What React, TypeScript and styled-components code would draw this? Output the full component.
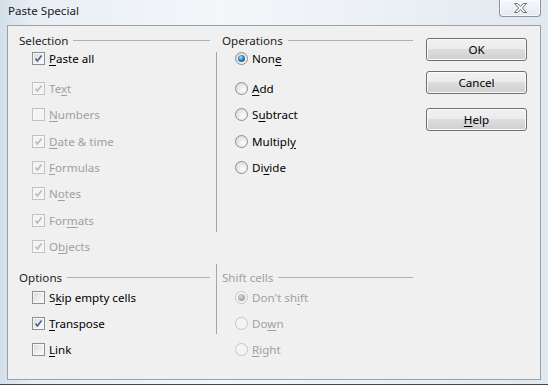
import styled, { createGlobalStyle } from "styled-components";

const GlobalStyle = createGlobalStyle`
  html, body {
    margin: 0;
    padding: 0;
  }
  body {
    width: 548px;
    height: 385px;
    overflow: hidden;
    font-family: "Noto Sans", "Segoe UI", sans-serif;
    font-size: 11.6px;
  }
`;

const Window = styled.div`
  width: 548px;
  height: 385px;
  box-sizing: border-box;
  display: flex;
  flex-direction: column;
  padding: 0 7px 4px 7px;
  background: linear-gradient(
    90deg,
    #d3dfea 0%,
    #e8eef4 6%,
    #f4f7fa 40%,
    #eaeff4 75%,
    #e1e8ee 100%
  );
  border-bottom: 1px solid #3d4650;
`;

const TitleBar = styled.div`
  height: 25px;
  display: flex;
  align-items: flex-start;
  justify-content: space-between;
`;

const Title = styled.div`
  padding: 3px 0 0 1px;
  line-height: 16px;
  color: #1a1a1a;
`;

const CloseButton = styled.div`
  width: 42px;
  height: 17px;
  box-sizing: border-box;
  display: flex;
  align-items: center;
  justify-content: center;
  border: 1px solid #8b949d;
  border-top: none;
  border-radius: 0 0 4px 4px;
  background: linear-gradient(#f6f8fa, #e6ebf0);
  box-shadow: inset 0 0 0 1px rgba(255, 255, 255, 0.7);
`;

const Client = styled.div`
  flex: 1;
  display: flex;
  border: 1px solid #98a2ab;
  background: #f0f0f0;
  padding: 7px 13px 0 11px;
  color: #000;
`;

const Groups = styled.div`
  display: grid;
  grid-template-columns: 191px 12px 191px;
  grid-template-rows: 237px auto;
`;

const Group = styled.div`
  display: flex;
  flex-direction: column;
`;

const Header = styled.div`
  display: flex;
  align-items: center;
  height: 15px;
  line-height: 15px;
`;

const HeaderText = styled.span<{ $disabled?: boolean }>`
  color: ${(p) => (p.$disabled ? "#a0a0a0" : "#1e1e1e")};
`;

const HeaderLine = styled.div`
  flex: 1;
  height: 1px;
  margin-left: 5px;
  background: #b0b0b0;
`;

const Body = styled.div<{ $offset: number }>`
  display: flex;
  flex-direction: column;
  padding-left: 13px;
  margin-top: ${(p) => p.$offset}px;
`;

const Separator = styled.div<{ $top: number; $height: number }>`
  width: 1px;
  margin-left: 6px;
  margin-top: ${(p) => p.$top}px;
  height: ${(p) => p.$height}px;
  background: #a5a5a5;
`;

const Row = styled.div<{ $gap?: boolean; $disabled?: boolean }>`
  display: flex;
  align-items: center;
  gap: 4px;
  height: 26.33px;
  margin-bottom: ${(p) => (p.$gap ? 4 : 0)}px;
  color: ${(p) => (p.$disabled ? "#a0a0a0" : "#000")};
  white-space: nowrap;
`;

const Box = styled.span<{ $disabled?: boolean }>`
  width: 13px;
  height: 13px;
  box-sizing: border-box;
  flex: none;
  display: flex;
  align-items: center;
  justify-content: center;
  border: 1px solid ${(p) => (p.$disabled ? "#c2c2c2" : "#8e8f8f")};
  box-shadow: inset 0 0 0 1px #f7f7f7;
  background: ${(p) =>
    p.$disabled
      ? "#f4f4f4"
      : "linear-gradient(135deg, #d5d9de 0%, #eef0f2 60%, #fbfbfb 100%)"};
`;

const Radio = styled.span<{ $disabled?: boolean }>`
  width: 13px;
  height: 13px;
  box-sizing: border-box;
  flex: none;
  display: flex;
  align-items: center;
  justify-content: center;
  border-radius: 50%;
  border: 1px solid ${(p) => (p.$disabled ? "#c6c6c6" : "#8e8f8f")};
  background: ${(p) =>
    p.$disabled
      ? "#f4f4f4"
      : "radial-gradient(circle at 65% 65%, #fdfdfd 0%, #e6e6e6 55%, #cfd2d6 100%)"};
`;

const Dot = styled.span<{ $disabled?: boolean }>`
  width: 7px;
  height: 7px;
  border-radius: 50%;
  background: ${(p) =>
    p.$disabled
      ? "radial-gradient(circle at 40% 35%, #d8d8d8 0%, #a9a9a9 60%, #8d8d8d 100%)"
      : "radial-gradient(circle at 40% 35%, #a7e3ff 0%, #2f7fbf 45%, #0e3e6c 100%)"};
`;

const Key = styled.span`
  text-decoration: underline;
  text-underline-offset: 2px;
`;

const ButtonColumn = styled.div`
  display: flex;
  flex-direction: column;
  margin-left: 13px;
  padding-top: 5px;
`;

const Button = styled.div<{ $space: number }>`
  width: 101px;
  height: 23px;
  box-sizing: border-box;
  margin-top: ${(p) => p.$space}px;
  display: flex;
  align-items: center;
  justify-content: center;
  border: 1px solid #707070;
  border-radius: 3px;
  background: linear-gradient(#f2f2f2 0%, #ebebeb 49%, #dddddd 50%, #cfcfcf 100%);
  box-shadow: inset 0 0 0 1px #fbfbfb;
  color: #000;
`;

const Mnemonic = ({ text, k }: { text: string; k: number }) => (
  <span>
    {text.slice(0, k)}
    <Key>{text[k]}</Key>
    {text.slice(k + 1)}
  </span>
);

type Item = { text: string; k: number; on: boolean; disabled?: boolean };

const Check = ({ disabled }: { disabled?: boolean }) => (
  <svg width="9" height="9" viewBox="0 0 9 9">
    <path
      d="M1.5 4.6 L3.4 7 L7.6 1.6"
      fill="none"
      stroke={disabled ? "#b9b9b9" : "#4b5f8a"}
      strokeWidth="1.6"
    />
  </svg>
);

const CheckList = ({ items, offset, first }: { items: Item[]; offset: number; first?: boolean }) => (
  <Body $offset={offset}>
    {items.map((it, i) => (
      <Row key={it.text} $gap={first && i === 0} $disabled={it.disabled}>
        <Box $disabled={it.disabled}>{it.on && <Check disabled={it.disabled} />}</Box>
        <Mnemonic text={it.text} k={it.k} />
      </Row>
    ))}
  </Body>
);

const RadioList = ({ items, offset, first }: { items: Item[]; offset: number; first?: boolean }) => (
  <Body $offset={offset}>
    {items.map((it, i) => (
      <Row key={it.text} $gap={first && i === 0} $disabled={it.disabled}>
        <Radio $disabled={it.disabled}>{it.on && <Dot $disabled={it.disabled} />}</Radio>
        <Mnemonic text={it.text} k={it.k} />
      </Row>
    ))}
  </Body>
);

const selection: Item[] = [
  { text: "Paste all", k: 0, on: true },
  { text: "Text", k: 2, on: true, disabled: true },
  { text: "Numbers", k: 0, on: false, disabled: true },
  { text: "Date & time", k: 0, on: true, disabled: true },
  { text: "Formulas", k: 0, on: true, disabled: true },
  { text: "Notes", k: 1, on: true, disabled: true },
  { text: "Formats", k: 3, on: true, disabled: true },
  { text: "Objects", k: 1, on: true, disabled: true },
];

const operations: Item[] = [
  { text: "None", k: 3, on: true },
  { text: "Add", k: 0, on: false },
  { text: "Subtract", k: 1, on: false },
  { text: "Multiply", k: 7, on: false },
  { text: "Divide", k: 2, on: false },
];

const options: Item[] = [
  { text: "Skip empty cells", k: 1, on: false },
  { text: "Transpose", k: 0, on: true },
  { text: "Link", k: 0, on: false },
];

const shift: Item[] = [
  { text: "Don't shift", k: 8, on: true, disabled: true },
  { text: "Down", k: 2, on: false, disabled: true },
  { text: "Right", k: 0, on: false, disabled: true },
];

const App = () => {
  return (
    <>
      <GlobalStyle />
      <Window>
        <TitleBar>
          <Title>Paste Special</Title>
          <CloseButton>
            <svg width="13" height="10" viewBox="0 0 13 10">
              <polygon
                points="0.5,0.5 3.6,0.5 6.5,3.3 9.4,0.5 12.5,0.5 8.3,5 12.5,9.5 9.4,9.5 6.5,6.7 3.6,9.5 0.5,9.5 4.7,5"
                fill="#f8f8f8"
                stroke="#5a5f66"
                strokeWidth="0.9"
              />
            </svg>
          </CloseButton>
        </TitleBar>
        <Client>
          <Groups>
            <Group>
              <Header>
                <HeaderText>Selection</HeaderText>
                <HeaderLine />
              </Header>
              <CheckList items={selection} offset={-3} first />
            </Group>
            <Separator $top={19} $height={180} />
            <Group>
              <Header>
                <HeaderText>Operations</HeaderText>
                <HeaderLine />
              </Header>
              <RadioList items={operations} offset={-3} first />
            </Group>
            <Group>
              <Header>
                <HeaderText>Options</HeaderText>
                <HeaderLine />
              </Header>
              <CheckList items={options} offset={-1} />
            </Group>
            <Separator $top={-6} $height={70} />
            <Group>
              <Header>
                <HeaderText $disabled>Shift cells</HeaderText>
                <HeaderLine />
              </Header>
              <RadioList items={shift} offset={-1} />
            </Group>
          </Groups>
          <ButtonColumn>
            <Button $space={0}>OK</Button>
            <Button $space={10}>Cancel</Button>
            <Button $space={14}>
              <Mnemonic text="Help" k={0} />
            </Button>
          </ButtonColumn>
        </Client>
      </Window>
    </>
  );
};

export default App;
